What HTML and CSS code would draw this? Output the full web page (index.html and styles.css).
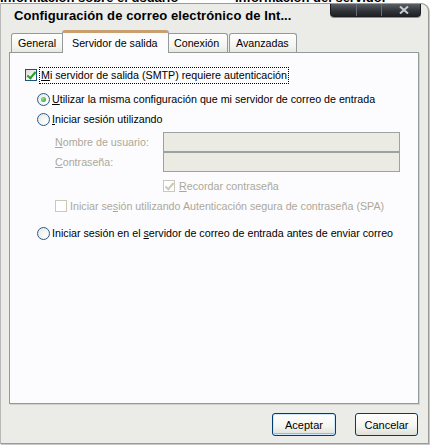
FILE: index.html
```html
<!DOCTYPE html>
<html lang="es">
<head>
  <meta charset="UTF-8" />
  <title>Configuración de correo electrónico de Internet</title>
  <link rel="stylesheet" href="styles.css">
</head>
<body>
  <div class="behind">
    <span class="behind-left">Información sobre el usuario</span>
    <span>Información del servidor</span>
  </div>

  <div class="window">
    <div class="titlebar">
      <span class="title">Configuración de correo electrónico de Int...</span>
      <div class="caption-btns">
        <span class="cap"></span>
        <span class="cap"></span>
        <span class="cap close">
          <svg width="10" height="8" viewBox="0 0 10 8"><path d="M1 0.5 L9 7.5 M9 0.5 L1 7.5" stroke="#c9ccd0" stroke-width="2"/></svg>
        </span>
      </div>
    </div>

    <div class="tabs">
      <span class="tab first">General</span>
      <span class="tab active">Servidor de salida</span>
      <span class="tab">Conexión</span>
      <span class="tab">Avanzadas</span>
    </div>

    <div class="panel">
      <div class="row top">
        <span class="check on"></span>
        <span class="focus"><u>M</u>i servidor de salida (SMTP) requiere autenticación</span>
      </div>

      <div class="options">
        <div class="row">
          <span class="radio on"></span>
          <span><u>U</u>tilizar la misma configuración que mi servidor de correo de entrada</span>
        </div>
        <div class="row">
          <span class="radio"></span>
          <span><u>I</u>niciar sesión utilizando</span>
        </div>

        <div class="login">
          <div class="field">
            <label><u>N</u>ombre de usuario:</label>
            <span class="input"></span>
          </div>
          <div class="field">
            <label><u>C</u>ontraseña:</label>
            <span class="input"></span>
          </div>
          <div class="row remember">
            <span class="check on disabled"></span>
            <span class="dim"><u>R</u>ecordar contraseña</span>
          </div>
          <div class="row spa">
            <span class="check disabled"></span>
            <span class="dim">Iniciar se<u>s</u>ión utilizando Autenticación segura de contraseña (SPA)</span>
          </div>
        </div>

        <div class="row last">
          <span class="radio"></span>
          <span>Iniciar sesión en el <u>s</u>ervidor de correo de entrada antes de enviar correo</span>
        </div>
      </div>
    </div>

    <div class="buttons">
      <button class="default">Aceptar</button>
      <button>Cancelar</button>
    </div>
  </div>
</body>
</html>
```

FILE: styles.css
```css
:root {
  --face: #ebebe8;
  --panel: #fcfcfe;
  --tab-border: #919b9c;
  --dim: #aca899;
  --ctl-border: #1c5180;
}

* {
  box-sizing: border-box;
}

body {
  margin: 0;
  background: #ffffff;
  font-family: "Liberation Sans", Arial, sans-serif;
  font-size: 10.7px;
  color: #000000;
  width: 430px;
  height: 446px;
  overflow: hidden;
}

u {
  text-decoration: underline;
  text-underline-offset: 1px;
}

/* window behind the dialog, only its bottom edge shows */
.behind {
  height: 4px;
  overflow: hidden;
  display: flex;
  padding-left: 0;
}

.behind span {
  font-size: 13px;
  font-weight: bold;
  line-height: 13px;
  margin-top: -9px;
  white-space: nowrap;
}

.behind-left {
  width: 235px;
  flex: none;
}

.window {
  margin-top: -1px;
  width: 429px;
  height: 441px;
  background: var(--face);
  border: 1px solid #9a9a98;
  border-left-color: #b8b8b6;
  border-radius: 0 8px 0 0;
  box-shadow: 1px 1px 0 #c8c8c6;
  display: flex;
  flex-direction: column;
  padding: 0 9px 0 8px;
}

.titlebar {
  height: 25px;
  display: flex;
  justify-content: space-between;
  align-items: flex-start;
  margin-left: -8px;
  margin-right: -9px;
  padding: 0 6px 0 13px;
}

.title {
  font-weight: bold;
  font-size: 13px;
  margin-top: 4px;
  letter-spacing: 0.1px;
}

.caption-btns {
  display: flex;
  height: 13px;
  background: linear-gradient(#5a5f66, #2f3338 60%, #1e2226);
  border-radius: 0 0 4px 4px;
  border: 1px solid #1a1c20;
  border-top: none;
  box-shadow: 0 1px 0 #8c8f94;
  margin-right: 1px;
}

.cap {
  width: 25px;
  height: 12px;
  border-left: 1px solid #6a6e74;
}

.cap:first-child {
  border-left: none;
}

.cap.close {
  width: 39px;
  display: flex;
  justify-content: center;
  align-items: center;
  padding-left: 5px;
}

.tabs {
  display: flex;
  align-items: flex-end;
  height: 23px;
  padding-left: 2px;
  position: relative;
  z-index: 1;
}

.tab {
  height: 19px;
  padding: 3px 5px 0 6px;
  border: 1px solid var(--tab-border);
  border-bottom: none;
  border-radius: 3px 3px 0 0;
  background: linear-gradient(#ffffff, #f3f3ef 70%, #e8e8e2);
}

.tab + .tab {
  margin-left: -1px;
}

.tab:nth-child(3) {
  width: 61px;
}

.tab:nth-child(4) {
  width: 68px;
  margin-left: 1px;
}

.tab.first {
  width: 53px;
}

.tab.active {
  width: 107px;
  height: 23px;
  padding: 4px 6px 0 9px;
  background: var(--panel);
  border-top: 3px solid #c8a070;
  margin: 0 -1px -1px -2px;
  position: relative;
  z-index: 2;
}

.panel {
  height: 352px;
  background: var(--panel);
  border: 1px solid var(--tab-border);
  box-shadow: 1px 1px 0 #d0d0cc;
  padding: 14px 0 0 15px;
}

.row {
  display: flex;
  align-items: center;
  gap: 3px;
  height: 16px;
}

.focus {
  outline: 1px dotted #000000;
  outline-offset: 0;
  padding: 1px;
  line-height: 13px;
}

.options {
  padding: 8px 0 0 12px;
  display: flex;
  flex-direction: column;
}

.options > .row {
  gap: 2px;
}

.options > .row + .row {
  margin-top: 4px;
}

.check {
  width: 12px;
  height: 12px;
  border: 1px solid var(--ctl-border);
  background: linear-gradient(135deg, #dcdcd7, #ffffff);
  flex: none;
  position: relative;
}

.check.on::after {
  content: "";
  position: absolute;
  left: 3px;
  top: 0;
  width: 3px;
  height: 7px;
  border: solid #21a121;
  border-width: 0 2px 2px 0;
  transform: rotate(40deg);
}

.check.disabled {
  border-color: #cac8bb;
  background: #ffffff;
}

.check.disabled.on::after {
  border-color: #cac8bb;
}

.radio {
  width: 13px;
  height: 13px;
  border-radius: 50%;
  border: 1px solid #2f5a84;
  background: radial-gradient(circle at 70% 70%, #ffffff, #e4e4de);
  flex: none;
  position: relative;
}

.radio.on::after {
  content: "";
  position: absolute;
  left: 3px;
  top: 3px;
  width: 5px;
  height: 5px;
  border-radius: 50%;
  background: radial-gradient(circle at 35% 35%, #8ee08e, #21a121);
}

.login {
  display: flex;
  flex-direction: column;
  padding: 5px 0 0 18px;
}

.field {
  display: flex;
  align-items: center;
  height: 20px;
}

.field label {
  color: var(--dim);
  width: 108px;
}

.input {
  width: 237px;
  height: 20px;
  background: #ebebe4;
  border: 1px solid #9aa3a4;
}

.dim {
  color: var(--dim);
}

.remember {
  margin: 6px 0 0 108px;
  gap: 4px;
}

.spa {
  margin-top: 4px;
  gap: 3px;
}

.options > .row.last {
  margin-top: 11px;
}

.buttons {
  display: flex;
  justify-content: flex-end;
  gap: 19px;
  padding: 9px 1px 0 0;
}

button {
  font: inherit;
  font-size: 11px;
  width: 63px;
  height: 23px;
  border: 1px solid #003c74;
  border-radius: 3px;
  background: linear-gradient(#ffffff, #f4f4f0 60%, #e0e0d8);
  color: #000000;
  padding: 0;
}

button.default {
  box-shadow: inset 0 0 0 1px #cee7ff, inset 0 -1px 0 1px #98b8ea;
  width: 64px;
}
```
